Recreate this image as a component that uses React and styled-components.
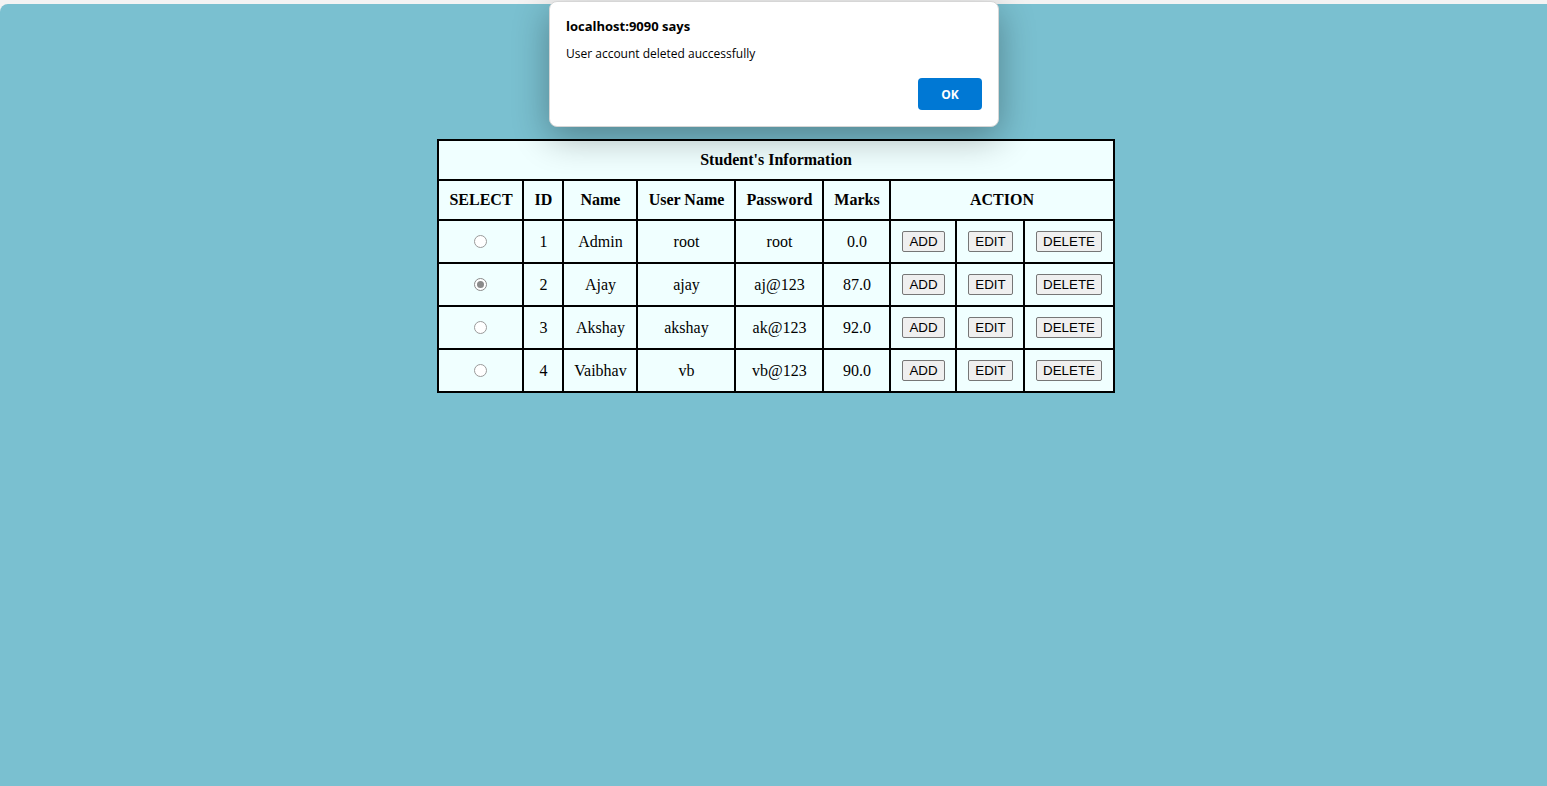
import React from "react";
import styled, { createGlobalStyle } from "styled-components";

const Global = createGlobalStyle`
  html, body { margin: 0; padding: 0; background: #f3f3f3; }
  body { font-family: "Liberation Serif", "Times New Roman", serif; }
`;

const Page = styled.div`
  margin-top: 4px;
  height: 782px;
  background: #7ac0d0;
  border-top-left-radius: 8px;
  box-sizing: border-box;
  padding: 135px 0 0 5px;
  display: flex;
  justify-content: center;
  align-items: flex-start;
  position: relative;
`;

const Table = styled.table`
  border-collapse: collapse;
  table-layout: fixed;
  width: 675px;
  background: #f0ffff;
  border: 2px solid #000;
  font-size: 16px;
  color: #000;
`;

const Th = styled.th`
  border: 2px solid #000;
  padding: 10px 0;
  line-height: 18px;
  font-weight: bold;
  text-align: center;
`;

const Td = styled.td`
  border: 2px solid #000;
  padding: 10px 0;
  line-height: 18px;
  text-align: center;
  vertical-align: middle;
`;

const Radio = styled.span`
  display: inline-block;
  width: 13px;
  height: 13px;
  box-sizing: border-box;
  border-radius: 50%;
  border: 1px solid ${(p) => (p.$checked ? "#8a8a8a" : "#9a9a9a")};
  background: #fff;
  vertical-align: middle;
  position: relative;
  top: -1px;
  &::after {
    content: "";
    display: ${(p) => (p.$checked ? "block" : "none")};
    position: absolute;
    left: 2px;
    top: 2px;
    width: 7px;
    height: 7px;
    border-radius: 50%;
    background: #8a8a8a;
  }
`;

const Btn = styled.button`
  font-family: "Liberation Sans", Arial, sans-serif;
  font-size: 13.33px;
  line-height: 15px;
  padding: 2px 6px 2px;
  background: #efefef;
  border: 1px solid #767676;
  border-radius: 2px;
  color: #000;
  vertical-align: middle;
`;

const Dialog = styled.div`
  position: absolute;
  left: 549px;
  top: -3px;
  width: 450px;
  box-sizing: border-box;
  background: #fff;
  border: 1px solid #d6d6d6;
  border-radius: 8px;
  box-shadow: 0 10px 36px rgba(0, 0, 0, 0.32);
  padding: 16px 16px 16px 16px;
  font-family: "Open Sans", "Noto Sans", sans-serif;
  color: #000;
`;

const Title = styled.div`
  font-size: 13px;
  font-weight: bold;
  line-height: 16px;
`;

const Message = styled.div`
  font-size: 12px;
  line-height: 16px;
  margin-top: 12px;
`;

const Actions = styled.div`
  display: flex;
  justify-content: flex-end;
  margin-top: 16px;
`;

const OkButton = styled.button`
  width: 64px;
  height: 32px;
  border: none;
  border-radius: 4px;
  background: #0078d4;
  color: #fff;
  font-family: "Open Sans", "Noto Sans", sans-serif;
  font-size: 12px;
  font-weight: bold;
`;

const cols = [85, 40, 74, 98, 88, 67, 66, 68, 89];

const rows = [
  { id: 1, name: "Admin", user: "root", pass: "root", marks: "0.0" },
  { id: 2, name: "Ajay", user: "ajay", pass: "aj@123", marks: "87.0", checked: true },
  { id: 3, name: "Akshay", user: "akshay", pass: "ak@123", marks: "92.0" },
  { id: 4, name: "Vaibhav", user: "vb", pass: "vb@123", marks: "90.0" },
];

export default function App() {
  return (
    <>
      <Global />
      <Page>
        <Table>
          <colgroup>
            {cols.map((w, i) => (
              <col key={i} style={{ width: w }} />
            ))}
          </colgroup>
          <thead>
            <tr>
              <Th colSpan={9}>Student's Information</Th>
            </tr>
            <tr>
              <Th>SELECT</Th>
              <Th>ID</Th>
              <Th>Name</Th>
              <Th>User Name</Th>
              <Th>Password</Th>
              <Th>Marks</Th>
              <Th colSpan={3}>ACTION</Th>
            </tr>
          </thead>
          <tbody>
            {rows.map((r) => (
              <tr key={r.id}>
                <Td><Radio $checked={r.checked} /></Td>
                <Td>{r.id}</Td>
                <Td>{r.name}</Td>
                <Td>{r.user}</Td>
                <Td>{r.pass}</Td>
                <Td>{r.marks}</Td>
                <Td><Btn>ADD</Btn></Td>
                <Td><Btn>EDIT</Btn></Td>
                <Td><Btn>DELETE</Btn></Td>
              </tr>
            ))}
          </tbody>
        </Table>
        <Dialog>
          <Title>localhost:9090 says</Title>
          <Message>User account deleted auccessfully</Message>
          <Actions>
            <OkButton>OK</OkButton>
          </Actions>
        </Dialog>
      </Page>
    </>
  );
}
